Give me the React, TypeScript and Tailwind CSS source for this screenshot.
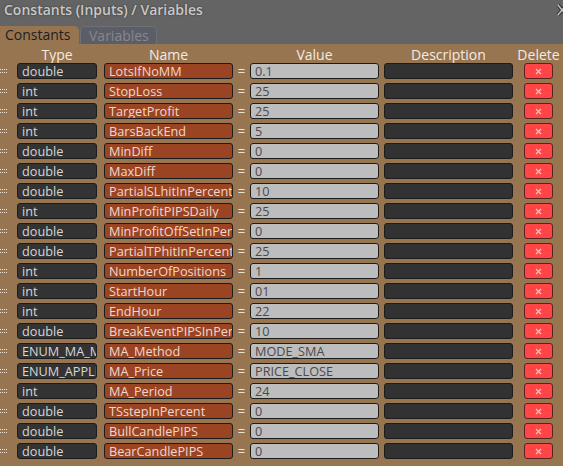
import React from 'react';

type Row = { type: string; name: string; value: string };

const rows: Row[] = [
  { type: 'double', name: 'LotsIfNoMM', value: '0.1' },
  { type: 'int', name: 'StopLoss', value: '25' },
  { type: 'int', name: 'TargetProfit', value: '25' },
  { type: 'int', name: 'BarsBackEnd', value: '5' },
  { type: 'double', name: 'MinDiff', value: '0' },
  { type: 'double', name: 'MaxDiff', value: '0' },
  { type: 'double', name: 'PartialSLhitInPercent', value: '10' },
  { type: 'int', name: 'MinProfitPIPSDaily', value: '25' },
  { type: 'double', name: 'MinProfitOffSetInPercent', value: '0' },
  { type: 'double', name: 'PartialTPhitInPercent', value: '25' },
  { type: 'int', name: 'NumberOfPositions', value: '1' },
  { type: 'int', name: 'StartHour', value: '01' },
  { type: 'int', name: 'EndHour', value: '22' },
  { type: 'double', name: 'BreakEventPIPSInPercent', value: '10' },
  { type: 'ENUM_MA_METHOD', name: 'MA_Method', value: 'MODE_SMA' },
  { type: 'ENUM_APPLIED_PRICE', name: 'MA_Price', value: 'PRICE_CLOSE' },
  { type: 'int', name: 'MA_Period', value: '24' },
  { type: 'double', name: 'TSstepInPercent', value: '0' },
  { type: 'double', name: 'BullCandlePIPS', value: '0' },
  { type: 'double', name: 'BearCandlePIPS', value: '0' },
];

const box =
  'h-[16px] border border-[#1c1c1c] rounded-[3px] px-[4px] text-[12.7px] leading-[14px] whitespace-nowrap overflow-hidden';

function Handle() {
  return (
    <div className="w-[17px] flex items-center">
      <div className="grid grid-cols-4 gap-x-[1px] gap-y-[2px]">
        {Array.from({ length: 8 }).map((_, i) => (
          <span key={i} className="w-[1px] h-[1px] bg-[#ece4da]" />
        ))}
      </div>
    </div>
  );
}

export default function App() {
  return (
    <div
      className="w-[563px] h-[466px] bg-[#987551] overflow-hidden"
      style={{ fontFamily: '"Open Sans", "Noto Sans", sans-serif' }}
    >
      <div className="relative h-[44px] bg-[#646464]">
        <div className="pl-[4px] text-[14px] leading-[19px] font-semibold text-[#c9c9c9] [text-shadow:0_0_2px_#333]">
          Constants (Inputs) / Variables
        </div>
        <svg
          className="absolute right-[-4px] top-[4px]"
          width="10"
          height="12"
          viewBox="0 0 10 12"
        >
          <path d="M1 1 L9 11 M9 1 L1 11" stroke="#2f2f2f" strokeWidth="3.5" strokeLinecap="round" />
          <path d="M1 1 L9 11 M9 1 L1 11" stroke="#bdbdbd" strokeWidth="1.6" strokeLinecap="round" />
        </svg>
        <div className="absolute left-0 bottom-0 flex items-end">
          <div className="h-[18px] w-[79px] bg-[#987551] rounded-tr-[5px] pl-[5px] text-[14px] leading-[18px] text-[#1e1e1e]">
            Constants
          </div>
          <div className="h-[18px] w-[77px] ml-[1px] bg-[#5b5e67] border border-b-0 border-[#6d7079] rounded-t-[5px] pl-[8px] text-[14px] leading-[17px] text-[#858891]">
            Variables
          </div>
        </div>
      </div>

      <div className="flex h-[19px] items-end text-[14px] leading-[16px] text-[#f3ebe2]">
        <div className="w-[17px]" />
        <div className="w-[80px] text-center">Type</div>
        <div className="w-[7px]" />
        <div className="w-[129px] text-center">Name</div>
        <div className="w-[17px]" />
        <div className="w-[129px] text-center">Value</div>
        <div className="w-[5px]" />
        <div className="w-[129px] text-center">Description</div>
        <div className="w-[11px]" />
        <div className="w-[29px] flex justify-center whitespace-nowrap">Delete</div>
      </div>

      <div className="flex flex-col gap-[4px]">
        {rows.map((r) => (
          <div key={r.name} className="flex h-[16px]">
            <Handle />
            <div className={`${box} w-[80px] bg-[#333333] text-[#d6d6d6]`}>{r.type}</div>
            <div className="w-[7px]" />
            <div className={`${box} w-[129px] bg-[#9a4424] text-[#eed9cd]`}>{r.name}</div>
            <div className="w-[17px] text-center text-[13px] leading-[16px] text-[#ece3d8]">=</div>
            <div className={`${box} w-[129px] bg-[#bdbdbd] text-[#4a4a4a]`}>{r.value}</div>
            <div className="w-[5px]" />
            <div className={`${box} w-[129px] bg-[#323232]`} />
            <div className="w-[11px]" />
            <div className="w-[29px] h-[16px] border border-[#5a2222] rounded-[3px] bg-[#ff4545] flex items-center justify-center">
              <svg width="7" height="7" viewBox="0 0 7 7">
                <path d="M1 1 L6 6 M6 1 L1 6" stroke="#f5c4c4" strokeWidth="1.2" />
              </svg>
            </div>
          </div>
        ))}
      </div>
    </div>
  );
}
